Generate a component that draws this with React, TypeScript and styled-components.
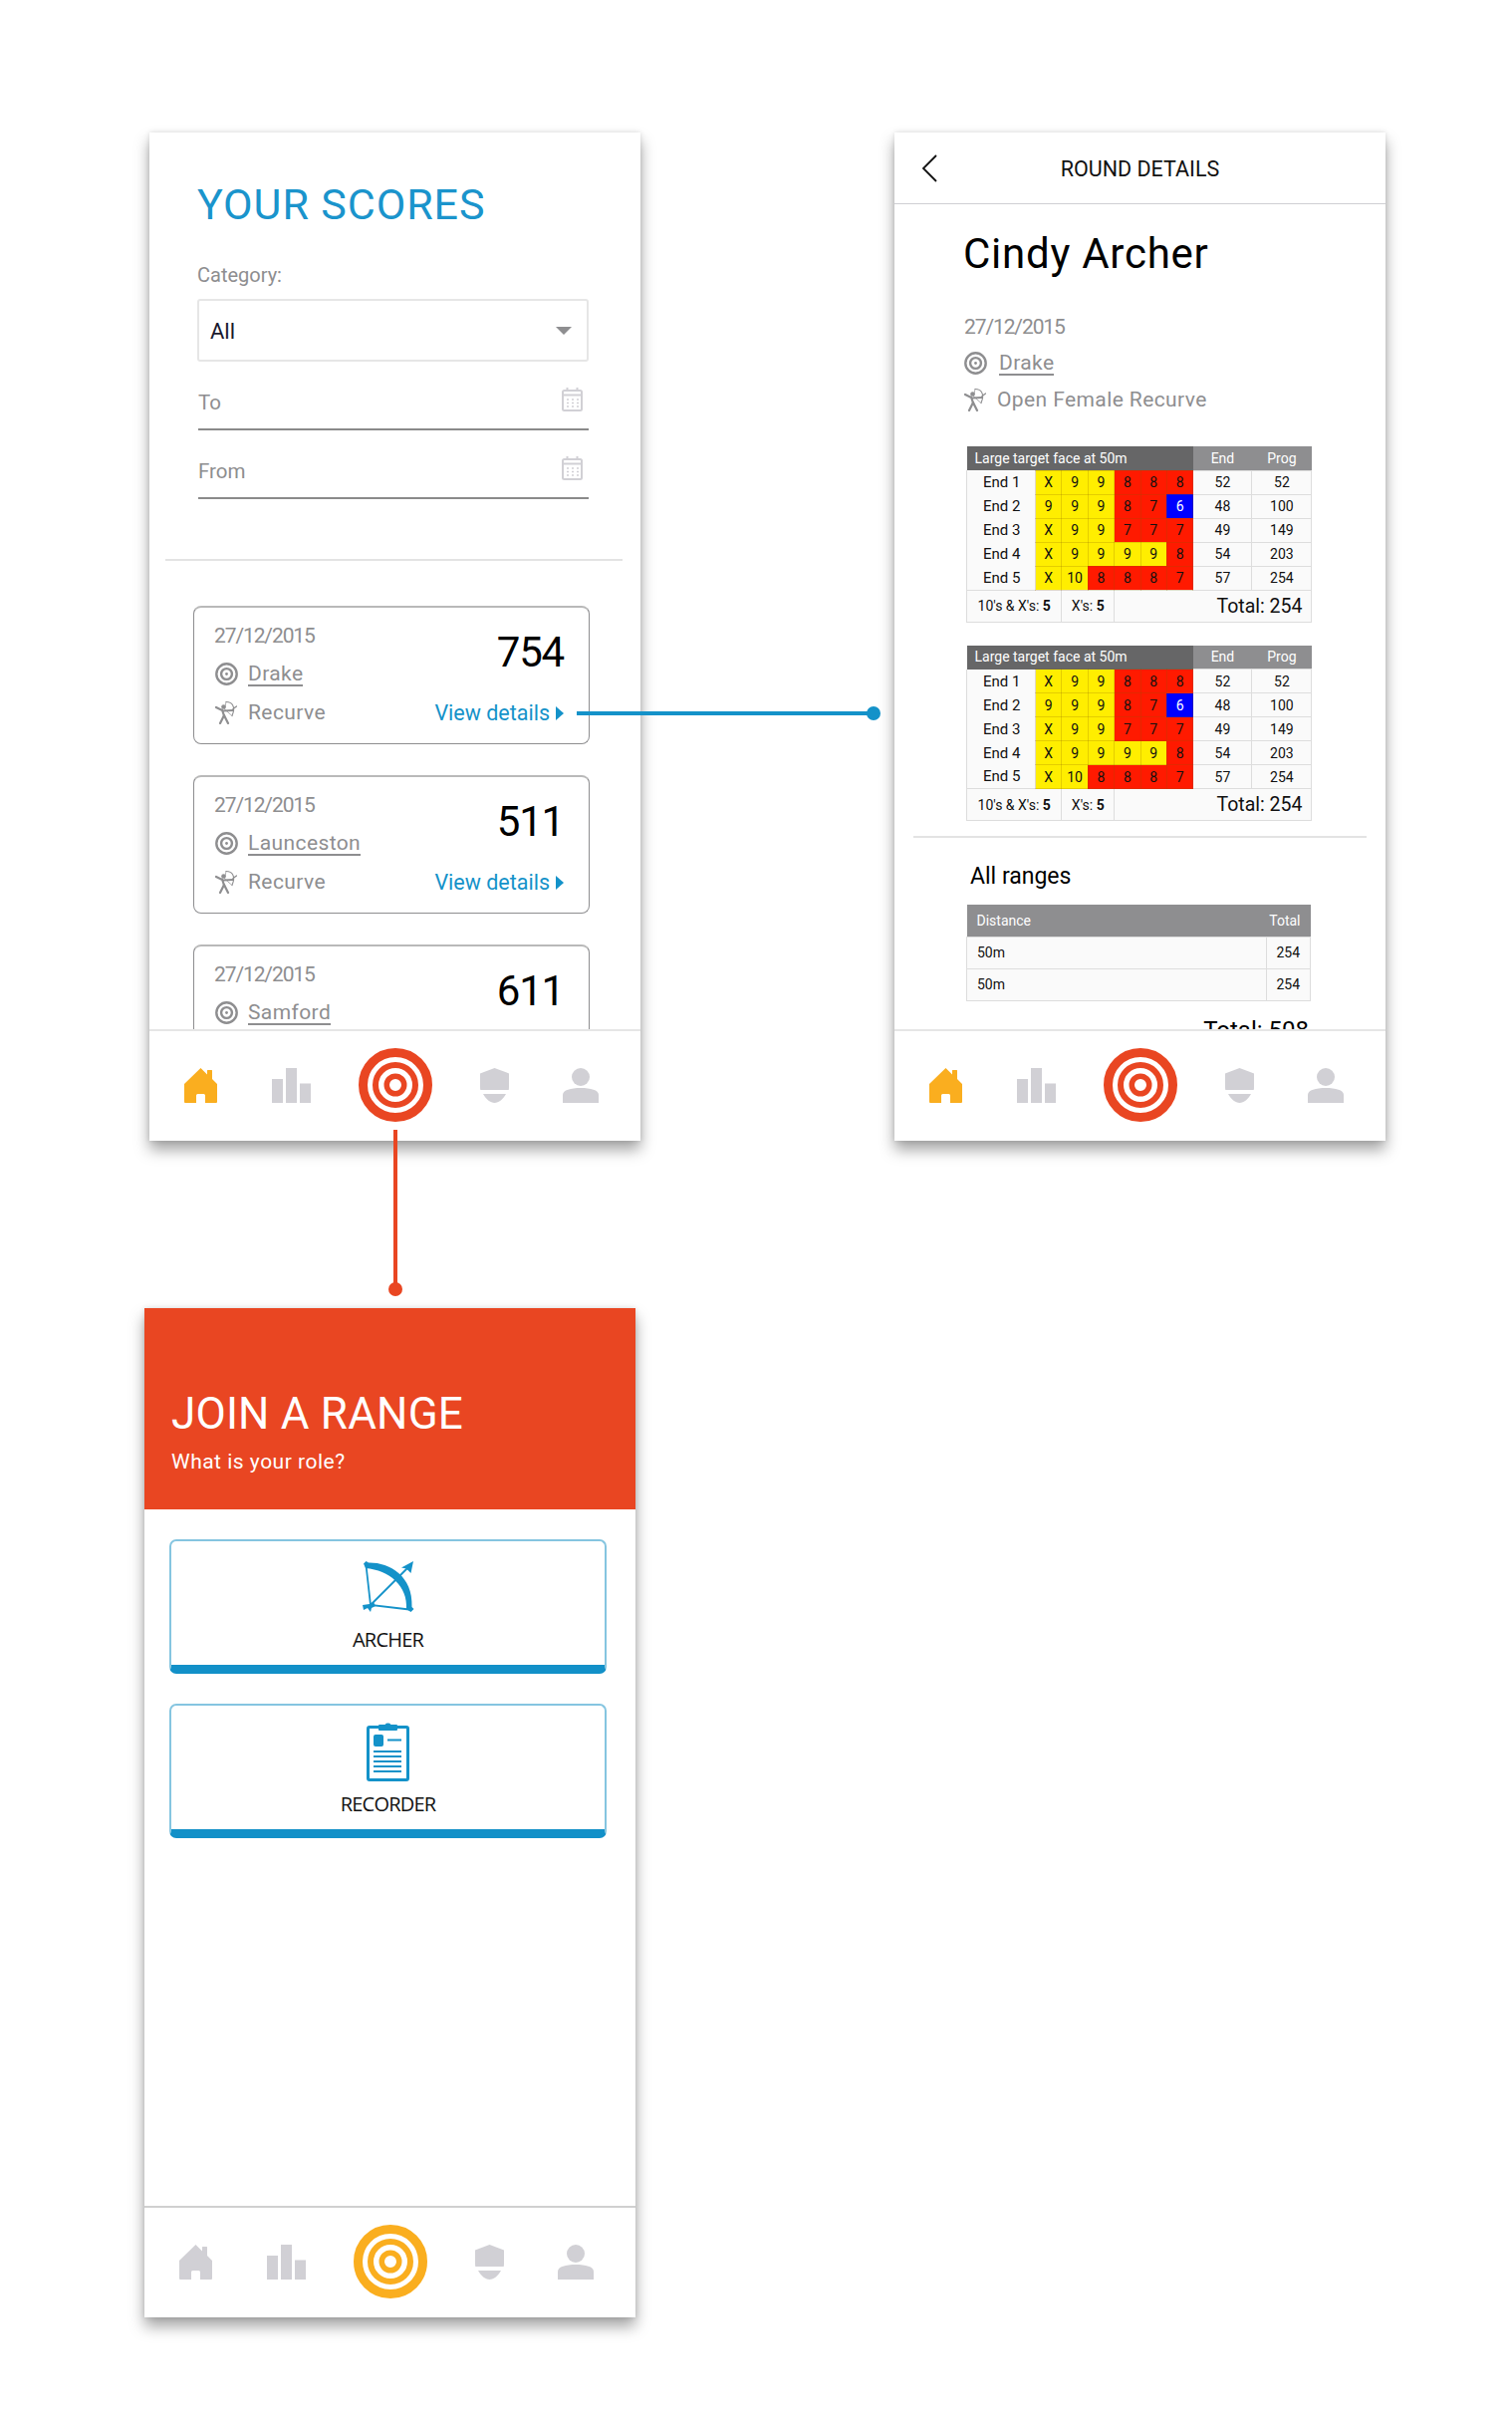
import React from 'react';
import styled, { createGlobalStyle } from 'styled-components';

const BLUE = '#1492c9';
const ORANGE = '#e94622';
const AMBER = '#faae1f';
const GREY = '#8e8e90';
const ICON_GREY = '#d1d0d5';

const GlobalStyle = createGlobalStyle`
  html, body {
    margin: 0;
    padding: 0;
    background: #fff;
  }
  body {
    font-family: Roboto, "Liberation Sans", sans-serif;
  }
  * {
    box-sizing: border-box;
  }
`;

const Board = styled.div`
  position: relative;
  width: 1518px;
  height: 2429px;
  padding-top: 133px;
  overflow: hidden;
`;

const TopRow = styled.div`
  display: flex;
  gap: 255px;
  margin-left: 150px;
`;

const Panel = styled.section`
  display: flex;
  flex-direction: column;
  width: 493px;
  height: 1012px;
  background: #fff;
  box-shadow: 0 9px 14px rgba(0, 0, 0, 0.36), 0 0 5px rgba(0, 0, 0, 0.12);
`;

const JoinPanel = styled(Panel)`
  height: 1013px;
  margin: 168px 0 0 145px;
`;

const Scroll = styled.div`
  flex: 1;
  min-height: 0;
  overflow: hidden;
`;

const ScoresBody = styled(Scroll)`
  padding: 47px 52px 0 48px;
`;

const Title = styled.h1`
  margin: 0;
  font-size: 43px;
  line-height: 50px;
  font-weight: 400;
  color: #1a94cc;
  letter-spacing: 0.9px;
`;

const FieldLabel = styled.div`
  margin-top: 34px;
  font-size: 20px;
  line-height: 24px;
  color: ${GREY};
`;

const Select = styled.div`
  display: flex;
  align-items: center;
  justify-content: space-between;
  height: 63px;
  margin-top: 12px;
  padding: 2px 15px 0 11px;
  border: 2px solid #e6e6e6;
  border-radius: 3px;
  font-size: 22px;
  color: #1a1a2e;
`;

const Caret = styled.span`
  width: 0;
  height: 0;
  margin-top: -2px;
  border-left: 8px solid transparent;
  border-right: 8px solid transparent;
  border-top: 8px solid ${GREY};
`;

const DateField = styled.div`
  display: flex;
  justify-content: space-between;
  height: 58px;
  margin: 11px 0 0 1px;
  padding: 18px 6px 0 0;
  border-bottom: 2px solid #8a8a8a;
  font-size: 20.5px;
  line-height: 24px;
  color: ${GREY};
`;

const CalendarSvg = styled.svg`
  margin-top: -3px;
`;

const Divider = styled.hr<{ $left: number; $width: number; $top: number }>`
  width: ${(p) => p.$width}px;
  height: 2px;
  margin: ${(p) => p.$top}px 0 0 ${(p) => p.$left}px;
  border: 0;
  background: #e3e3e3;
`;

const CardList = styled.div`
  display: flex;
  flex-direction: column;
  gap: 31px;
  width: 398px;
  margin: 45px 0 0 -4px;
`;

const Card = styled.article`
  display: flex;
  flex: none;
  justify-content: space-between;
  height: 139px;
  padding: 16px 25px 0 20px;
  border: 1px solid ${GREY};
  border-top: 2px solid #b9b9b9;
  border-radius: 8px;
`;

const MetaColumn = styled.div`
  display: flex;
  flex-direction: column;
  gap: 14px;
`;

const MetaDate = styled.div`
  font-size: 21px;
  line-height: 24px;
  letter-spacing: -1.1px;
  color: ${GREY};
`;

const MetaRow = styled.div<{ $gap: number; $inset?: number }>`
  display: flex;
  align-items: center;
  gap: ${(p) => p.$gap}px;
  padding-left: ${(p) => p.$inset ?? 0}px;
  font-size: 21px;
  line-height: 24px;
  color: ${GREY};
  letter-spacing: 0.4px;
`;

const RangeName = styled.span`
  border-bottom: 2px solid ${GREY};
  line-height: 22px;
  margin-top: 1px;
`;

const ScoreColumn = styled.div`
  display: flex;
  flex-direction: column;
  align-items: flex-end;
  padding-top: 5px;
`;

const Score = styled.div`
  font-size: 42px;
  line-height: 48px;
  font-weight: 400;
  letter-spacing: -1.2px;
  color: #000;
`;

const ViewLink = styled.a`
  display: flex;
  align-items: center;
  gap: 6px;
  margin-top: 25px;
  font-size: 21.5px;
  line-height: 24px;
  color: ${BLUE};

  &::after {
    content: '';
    border-left: 8px solid ${BLUE};
    border-top: 7px solid transparent;
    border-bottom: 7px solid transparent;
  }
`;

const NavBar = styled.nav<{ $line: string }>`
  display: flex;
  flex: none;
  align-items: center;
  height: 112px;
  padding: 0 0 2px 35px;
  border-top: 2px solid ${(p) => p.$line};
`;

const NavSlot = styled.span<{ $gap: number }>`
  display: flex;
  margin-left: ${(p) => p.$gap}px;
`;

const DetailHeader = styled.header`
  display: grid;
  flex: none;
  grid-template-columns: 1fr auto 1fr;
  align-items: center;
  height: 72px;
  border-bottom: 1px solid #cfcfd3;
`;

const BackIcon = styled.svg`
  margin-left: 27px;
`;

const DetailTitle = styled.div`
  margin-top: 2px;
  font-size: 21.5px;
  color: #111;
`;

const DetailBody = styled(Scroll)`
  padding-left: 69px;
`;

const ArcherName = styled.h2`
  margin: 25px 0 0;
  font-size: 42px;
  line-height: 50px;
  font-weight: 400;
  letter-spacing: 0.75px;
  color: #000;
`;

const DetailMeta = styled.div`
  display: flex;
  flex-direction: column;
  gap: 12px;
  margin: 36px 0 0 1px;
`;

const ScoreTable = styled.table`
  width: 346px;
  margin: 35px 0 0 3px;
  border-collapse: collapse;
  table-layout: fixed;
  background: #fafafa;
  font-size: 14px;
  color: #111;

  & + & {
    margin-top: 23px;
  }
`;

const HeadCell = styled.th<{ $dark?: boolean }>`
  height: 24px;
  padding: 0;
  background: ${(p) => (p.$dark ? '#666667' : GREY)};
  color: #fff;
  font-size: 14px;
  font-weight: 400;
  text-align: center;
`;

const HeadTitle = styled(HeadCell)`
  padding-left: 8px;
  text-align: left;
`;

const RowLabel = styled.td`
  height: 24px;
  padding: 0 0 0 16px;
  border-left: 1px solid #ddd;
  font-size: 15px;
`;

const Shot = styled.td<{ $value: string }>`
  padding: 0;
  border: 1px solid rgba(130, 90, 0, 0.22);
  text-align: center;
  color: ${(p) => (p.$value === '6' ? '#fff' : '#111')};
  background: ${(p) =>
    p.$value === '6'
      ? '#0000ff'
      : p.$value === '8' || p.$value === '7'
        ? '#ff1a00'
        : '#ffee00'};
`;

const SumCell = styled.td`
  padding: 0;
  border: 1px solid #ddd;
  text-align: center;
`;

const FootCell = styled.td`
  height: 32px;
  padding: 0;
  border: 1px solid #ddd;
  text-align: center;
  font-size: 14px;
`;

const TotalCell = styled(FootCell)`
  padding-right: 9px;
  font-size: 19.5px;
  text-align: right;
`;

const RangesHeading = styled.h3`
  margin: 25px 0 0 7px;
  font-size: 23px;
  line-height: 28px;
  font-weight: 400;
  color: #000;
`;

const RangeTable = styled(ScoreTable)`
  margin-top: 14px;
`;

const RangeHead = styled.th<{ $right?: boolean }>`
  height: 32px;
  padding: ${(p) => (p.$right ? '0 10px 0 0' : '0 10px')};
  background: ${GREY};
  color: #fff;
  font-size: 14px;
  font-weight: 400;
  text-align: ${(p) => (p.$right ? 'right' : 'left')};
  white-space: nowrap;
`;

const RangeCell = styled.td<{ $right?: boolean }>`
  height: 32px;
  padding: ${(p) => (p.$right ? '0 10px 0 0' : '0 10px')};
  border: 1px solid #ddd;
  font-size: 14px;
  text-align: ${(p) => (p.$right ? 'right' : 'left')};
`;

const GrandTotal = styled.div`
  width: 344px;
  margin: 13px 0 0 3px;
  font-size: 24px;
  line-height: 32px;
  color: #000;
  text-align: right;
`;

const JoinHeader = styled.header`
  flex: none;
  height: 202px;
  padding: 80px 0 0 27px;
  background: ${ORANGE};
  color: #fff;
`;

const JoinTitle = styled.h2`
  margin: 0;
  font-size: 44px;
  line-height: 52px;
  font-weight: 400;
  letter-spacing: 0.2px;
`;

const JoinSub = styled.div`
  margin-top: 9px;
  font-size: 21px;
  line-height: 26px;
  letter-spacing: 0.5px;
`;

const JoinBody = styled(Scroll)`
  display: flex;
  flex-direction: column;
  gap: 30px;
  padding: 30px 29px 0 25px;
`;

const RoleButton = styled.button`
  display: flex;
  flex: none;
  flex-direction: column;
  align-items: center;
  height: 135px;
  padding: 15px 0 0;
  border: 2px solid #85c5e0;
  border-bottom: 9px solid #1290c8;
  border-radius: 7px;
  background: #fff;
`;

const RoleIcon = styled.span`
  display: flex;
  align-items: center;
  height: 62px;
`;

const RoleLabel = styled.span`
  margin-top: 10px;
  font-family: 'Open Sans', sans-serif;
  font-size: 20px;
  line-height: 24px;
  letter-spacing: -0.8px;
  color: #111;
`;

const HorizontalLink = styled.div`
  position: absolute;
  top: 714px;
  left: 579px;
  width: 298px;
  height: 4px;
  background: ${BLUE};

  &::after {
    content: '';
    position: absolute;
    top: -5px;
    right: -7px;
    width: 14px;
    height: 14px;
    border-radius: 50%;
    background: ${BLUE};
  }
`;

const VerticalLink = styled.div`
  position: absolute;
  top: 1134px;
  left: 395px;
  width: 4px;
  height: 160px;
  background: ${ORANGE};

  &::after {
    content: '';
    position: absolute;
    bottom: -7px;
    left: -5px;
    width: 14px;
    height: 14px;
    border-radius: 50%;
    background: ${ORANGE};
  }
`;

const Calendar = () => (
  <CalendarSvg width="21" height="24" viewBox="0 0 21 24" fill="none">
    <rect x="1" y="3" width="19" height="20" rx="1.5" stroke={ICON_GREY} strokeWidth="2" />
    <path d="M1 7.5h19" stroke={ICON_GREY} strokeWidth="2" />
    <path d="M5.5 0v3M15.5 0v3" stroke={ICON_GREY} strokeWidth="2" />
    <path
      d="M5 12h2M10 12h2M15 12h2M5 15.5h2M10 15.5h2M15 15.5h2M5 19h2M10 19h2M15 19h2"
      stroke={ICON_GREY}
      strokeWidth="1.6"
    />
  </CalendarSvg>
);

const TargetMark = () => (
  <svg width="23" height="23" viewBox="0 0 23 23" fill="none" stroke={GREY}>
    <circle cx="11.5" cy="11.5" r="10.2" strokeWidth="2.4" />
    <circle cx="11.5" cy="11.5" r="5.4" strokeWidth="2.4" />
    <circle cx="11.5" cy="11.5" r="1.4" fill={GREY} strokeWidth="0" />
  </svg>
);

const ArcherMark = () => (
  <svg width="22" height="24" viewBox="0 0 22 24" fill="none" stroke={GREY} strokeLinecap="round">
    <circle cx="8.5" cy="6.5" r="2.3" fill={GREY} stroke="none" />
    <path d="M7 9.5 9 15.5M1 7l7 3.5 10-.5" strokeWidth="2.2" />
    <path d="M9 15 5 23M9 15l4 8" strokeWidth="2.2" />
    <path d="M11 1.5C17 1.5 21 6 17 15.5" strokeWidth="1.1" />
    <path d="M11 1.5 9.5 9 17 15.5" strokeWidth="0.7" />
    <path d="M18 8.5 21.5 6" strokeWidth="1.4" />
  </svg>
);

const HomeIcon = ({ color }: { color: string }) => (
  <svg width="33" height="35" viewBox="0 0 33 35">
    <path
      fill={color}
      d="M16.5 0 23 6.5V2.500Q23 2 23.5 2h4Q28 2 28 2.500V11l5 5v18Q33 35 32 35H21V27.500Q21 26 19.5 26h-6Q12 26 12 27.500V35H1Q0 35 0 34V16Z"
    />
  </svg>
);

const BarsIcon = () => (
  <svg width="39" height="35" viewBox="0 0 39 35" fill={ICON_GREY}>
    <rect x="0" y="11" width="11" height="24" />
    <rect x="14" y="0" width="11" height="35" />
    <rect x="28" y="15.5" width="11" height="19.5" />
  </svg>
);

const ShieldIcon = () => (
  <svg width="29" height="35" viewBox="0 0 29 35" fill={ICON_GREY}>
    <path d="M14.5 0 29 5.5V18.5Q29 20.5 28.7 22H.3Q0 20.5 0 18.5V5.5Z" />
    <path d="M3 26H26C23.5 31 18.5 35 14.5 35S5.5 31 3 26Z" />
  </svg>
);

const UserIcon = () => (
  <svg width="36" height="35" viewBox="0 0 36 35" fill={ICON_GREY}>
    <circle cx="18" cy="9" r="9" />
    <path d="M0 35V27C0 22 8 20 18 20S36 22 36 27V35Z" />
  </svg>
);

const Bullseye = ({ color }: { color: string }) => (
  <svg width="74" height="74" viewBox="0 0 74 74" fill="none" stroke={color}>
    <circle cx="37" cy="37" r="32.5" strokeWidth="9" />
    <circle cx="37" cy="37" r="20" strokeWidth="6" />
    <circle cx="37" cy="37" r="8.75" strokeWidth="5.5" />
  </svg>
);

const BowIcon = () => (
  <svg width="52" height="52" viewBox="0 0 52 52" fill="none">
    <path
      fill={BLUE}
      d="M1 2.5 3.5 0 6 1.5C26 1 51 14 49.5 46l2 2-3 3-4.500-3C45.5 25 27 9 3 7Z"
    />
    <path d="M3.5 4 8 44l39 4.5" stroke={BLUE} strokeWidth="1.8" />
    <path d="M6 46 47 5" stroke={BLUE} strokeWidth="1.8" />
    <path fill={BLUE} d="M51 0 48.5 12 44 7.5 39 6.5Z" />
    <path fill={BLUE} d="M0 44 7 43 11 41 13 45 9 47 8 51 5 47 1 49Z" />
  </svg>
);

const ClipboardIcon = () => (
  <svg width="43" height="60" viewBox="0 0 43 60">
    <rect x="1.5" y="5.5" width="40" height="53" rx="1.5" fill="#fff" stroke={BLUE} strokeWidth="3" />
    <path fill={BLUE} d="M13 3h5.5A3.5 3 0 0 1 24.5 3H30q1 0 1 1v4q0 1-1 1H13q-1 0-1-1V4q0-1 1-1Z" />
    <rect x="7" y="13" width="10" height="12" rx="2" fill={BLUE} />
    <path d="M21 18.5h14M7 30h28M7 35h28M7 40h28M7 45h28M7 50h28" stroke={BLUE} strokeWidth="2" />
  </svg>
);

const BottomNav = ({
  homeColor,
  targetColor,
  line,
}: {
  homeColor: string;
  targetColor: string;
  line: string;
}) => (
  <NavBar $line={line}>
    <NavSlot $gap={0}>
      <HomeIcon color={homeColor} />
    </NavSlot>
    <NavSlot $gap={55}>
      <BarsIcon />
    </NavSlot>
    <NavSlot $gap={48}>
      <Bullseye color={targetColor} />
    </NavSlot>
    <NavSlot $gap={48}>
      <ShieldIcon />
    </NavSlot>
    <NavSlot $gap={54}>
      <UserIcon />
    </NavSlot>
  </NavBar>
);

const scoreCards = [
  { range: 'Drake', score: 754 },
  { range: 'Launceston', score: 511 },
  { range: 'Samford', score: 611 },
];

const ends = [
  { name: 'End 1', shots: ['X', '9', '9', '8', '8', '8'], end: 52, prog: 52 },
  { name: 'End 2', shots: ['9', '9', '9', '8', '7', '6'], end: 48, prog: 100 },
  { name: 'End 3', shots: ['X', '9', '9', '7', '7', '7'], end: 49, prog: 149 },
  { name: 'End 4', shots: ['X', '9', '9', '9', '9', '8'], end: 54, prog: 203 },
  { name: 'End 5', shots: ['X', '10', '8', '8', '8', '7'], end: 57, prog: 254 },
];

const RoundTable = () => (
  <ScoreTable>
    <colgroup>
      <col style={{ width: 69 }} />
      <col span={6} style={{ width: 26.4 }} />
      <col style={{ width: 59 }} />
      <col style={{ width: 60 }} />
    </colgroup>
    <thead>
      <tr>
        <HeadTitle as="th" colSpan={7} $dark>
          Large target face at 50m
        </HeadTitle>
        <HeadCell>End</HeadCell>
        <HeadCell>Prog</HeadCell>
      </tr>
    </thead>
    <tbody>
      {ends.map((row) => (
        <tr key={row.name}>
          <RowLabel>{row.name}</RowLabel>
          {row.shots.map((shot, i) => (
            <Shot key={i} $value={shot}>
              {shot}
            </Shot>
          ))}
          <SumCell>{row.end}</SumCell>
          <SumCell>{row.prog}</SumCell>
        </tr>
      ))}
      <tr>
        <FootCell colSpan={2}>
          10's &amp; X's: <b>5</b>
        </FootCell>
        <FootCell colSpan={2}>
          X's: <b>5</b>
        </FootCell>
        <TotalCell colSpan={5}>Total: 254</TotalCell>
      </tr>
    </tbody>
  </ScoreTable>
);

export default function App() {
  return (
    <Board>
      <GlobalStyle />
      <TopRow>
        <Panel>
          <ScoresBody>
            <Title>YOUR SCORES</Title>
            <FieldLabel>Category:</FieldLabel>
            <Select>
              All
              <Caret />
            </Select>
            <DateField>
              To
              <Calendar />
            </DateField>
            <DateField>
              From
              <Calendar />
            </DateField>
            <Divider $left={-32} $width={459} $top={60} />
            <CardList>
              {scoreCards.map((card) => (
                <Card key={card.range}>
                  <MetaColumn>
                    <MetaDate>27/12/2015</MetaDate>
                    <MetaRow $gap={10} $inset={1}>
                      <TargetMark />
                      <RangeName>{card.range}</RangeName>
                    </MetaRow>
                    <MetaRow $gap={11} $inset={1}>
                      <ArcherMark />
                      Recurve
                    </MetaRow>
                  </MetaColumn>
                  <ScoreColumn>
                    <Score>{card.score}</Score>
                    <ViewLink>View details</ViewLink>
                  </ScoreColumn>
                </Card>
              ))}
            </CardList>
          </ScoresBody>
          <BottomNav homeColor={AMBER} targetColor={ORANGE} line="#e6e6e6" />
        </Panel>
        <Panel>
          <DetailHeader>
            <BackIcon width="16" height="28" viewBox="0 0 16 28" fill="none">
              <path d="M15 1 2 14l13 13" stroke="#111" strokeWidth="1.8" />
            </BackIcon>
            <DetailTitle>ROUND DETAILS</DetailTitle>
          </DetailHeader>
          <DetailBody>
            <ArcherName>Cindy Archer</ArcherName>
            <DetailMeta>
              <MetaDate>27/12/2015</MetaDate>
              <MetaRow $gap={12}>
                <TargetMark />
                <RangeName>Drake</RangeName>
              </MetaRow>
              <MetaRow $gap={11}>
                <ArcherMark />
                Open Female Recurve
              </MetaRow>
            </DetailMeta>
            <RoundTable />
            <RoundTable />
            <Divider $left={-50} $width={455} $top={15} />
            <RangesHeading>All ranges</RangesHeading>
            <RangeTable>
              <colgroup>
                <col />
                <col style={{ width: 44 }} />
              </colgroup>
              <thead>
                <tr>
                  <RangeHead>Distance</RangeHead>
                  <RangeHead $right>Total</RangeHead>
                </tr>
              </thead>
              <tbody>
                <tr>
                  <RangeCell>50m</RangeCell>
                  <RangeCell $right>254</RangeCell>
                </tr>
                <tr>
                  <RangeCell>50m</RangeCell>
                  <RangeCell $right>254</RangeCell>
                </tr>
              </tbody>
            </RangeTable>
            <GrandTotal>Total: 508</GrandTotal>
          </DetailBody>
          <BottomNav homeColor={AMBER} targetColor={ORANGE} line="#e6e6e6" />
        </Panel>
      </TopRow>
      <JoinPanel>
        <JoinHeader>
          <JoinTitle>JOIN A RANGE</JoinTitle>
          <JoinSub>What is your role?</JoinSub>
        </JoinHeader>
        <JoinBody>
          <RoleButton>
            <RoleIcon>
              <BowIcon />
            </RoleIcon>
            <RoleLabel>ARCHER</RoleLabel>
          </RoleButton>
          <RoleButton>
            <RoleIcon>
              <ClipboardIcon />
            </RoleIcon>
            <RoleLabel>RECORDER</RoleLabel>
          </RoleButton>
        </JoinBody>
        <BottomNav homeColor={ICON_GREY} targetColor={AMBER} line="#d0d0d0" />
      </JoinPanel>
      <HorizontalLink />
      <VerticalLink />
    </Board>
  );
}
